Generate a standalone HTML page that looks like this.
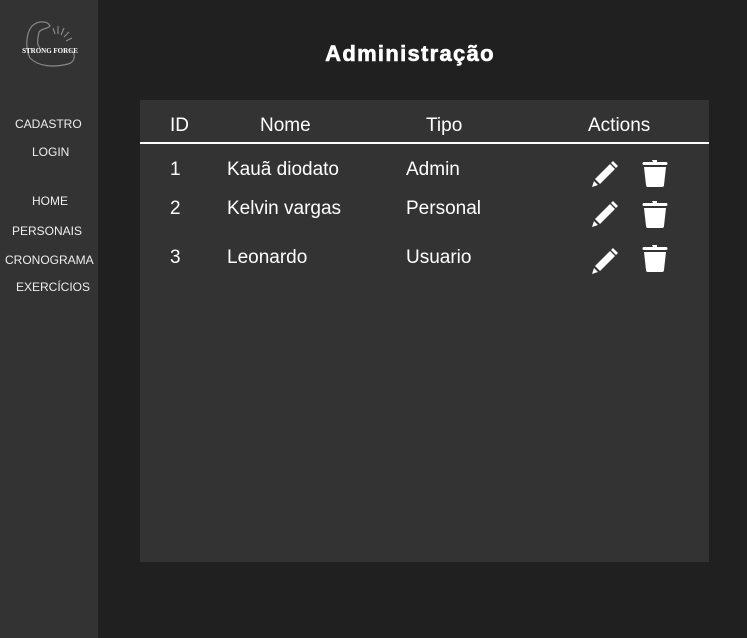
<!DOCTYPE html>
<html><head><meta charset="utf-8"><style>
*{margin:0;padding:0;box-sizing:border-box}
body{width:747px;height:638px;background:#202020;font-family:"Liberation Sans",sans-serif;color:#fff;position:relative;overflow:hidden}
.side{position:absolute;left:0;top:0;width:98px;height:638px;background:#333}
.nav{position:absolute;font-size:12px;color:#eee;white-space:nowrap}
.t{position:absolute;font-size:19px;white-space:nowrap;line-height:1}
.panel{position:absolute;left:140px;top:100px;width:569px;height:462px;background:#333}
h1{position:absolute;left:0;width:820px;top:41px;text-align:center;font-size:22px;font-weight:900;letter-spacing:1.3px;-webkit-text-stroke:0.6px #fff}
</style></head><body>
<div class="side">
<svg style="position:absolute;left:22px;top:18px" width="56" height="56" viewBox="0 0 56 56" fill="none" stroke="#888" stroke-width="1.2">
<path d="M8 40 C3 30 4 15 10 8 C16 2 26 3 28 8 C26 11 20 10 17 14 C16 20 14 26 18 30"/>
<path d="M8 40 C16 48 30 50 46 46 C54 44 54 34 48 32"/>
<path d="M36 8 l0 8 M42 10 l-3 7 M47 14 l-5 5 M31 10 l2 6 M50 20 l-6 3"/>
<text x="28" y="35" font-size="7" fill="#fff" stroke="none" text-anchor="middle" font-weight="bold" font-family="Liberation Serif">STRONG FORCE</text>
</svg>
<div class="nav" style="left:15px;top:117px">CADASTRO</div>
<div class="nav" style="left:32px;top:145px">LOGIN</div>
<div class="nav" style="left:32px;top:194px">HOME</div>
<div class="nav" style="left:12px;top:224px">PERSONAIS</div>
<div class="nav" style="left:5px;top:253px">CRONOGRAMA</div>
<div class="nav" style="left:16px;top:280px">EXERCÍCIOS</div>
</div>
<h1>Administração</h1>
<div class="panel"></div>
<div style="position:absolute;left:140px;top:142px;width:569px;height:2px;background:#fff"></div>
<div class="t" style="left:170px;top:116px">ID</div>
<div class="t" style="left:260px;top:116px">Nome</div>
<div class="t" style="left:426px;top:116px">Tipo</div>
<div class="t" style="left:588px;top:116px">Actions</div>
<div class="t" style="left:170px;top:160px">1</div>
<div class="t" style="left:227px;top:160px">Kauã diodato</div>
<div class="t" style="left:406px;top:160px">Admin</div>
<div class="t" style="left:170px;top:199px">2</div>
<div class="t" style="left:227px;top:199px">Kelvin vargas</div>
<div class="t" style="left:406px;top:199px">Personal</div>
<div class="t" style="left:170px;top:248px">3</div>
<div class="t" style="left:227px;top:248px">Leonardo</div>
<div class="t" style="left:406px;top:248px">Usuario</div>
<svg width="0" height="0" style="position:absolute"><defs>
<g id="pen" fill="#fff"><path d="M22 1 L27 6 L25 8 L20 3 Z M19 4 L24 9 L9 24 L4 19 Z M3 21 L7 25 L1 27 Z"/></g>
<g id="bin" fill="#fff"><path d="M10 1 h5 v2 h9 a1 1 0 0 1 0 3 h-22 a1 1 0 0 1 0 -3 h9 z M2 8 h22 l-2 18 a2 2 0 0 1 -2 2 h-14 a2 2 0 0 1 -2 -2 z"/></g>
</defs></svg>
<svg style="position:absolute;left:591px;top:160px" width="28" height="28"><use href="#pen"/></svg>
<svg style="position:absolute;left:642px;top:159px" width="27" height="29"><use href="#bin"/></svg>
<svg style="position:absolute;left:591px;top:200px" width="28" height="28"><use href="#pen"/></svg>
<svg style="position:absolute;left:642px;top:200px" width="27" height="29"><use href="#bin"/></svg>
<svg style="position:absolute;left:591px;top:247px" width="28" height="28"><use href="#pen"/></svg>
<svg style="position:absolute;left:642px;top:244px" width="27" height="29"><use href="#bin"/></svg>
</body></html>
